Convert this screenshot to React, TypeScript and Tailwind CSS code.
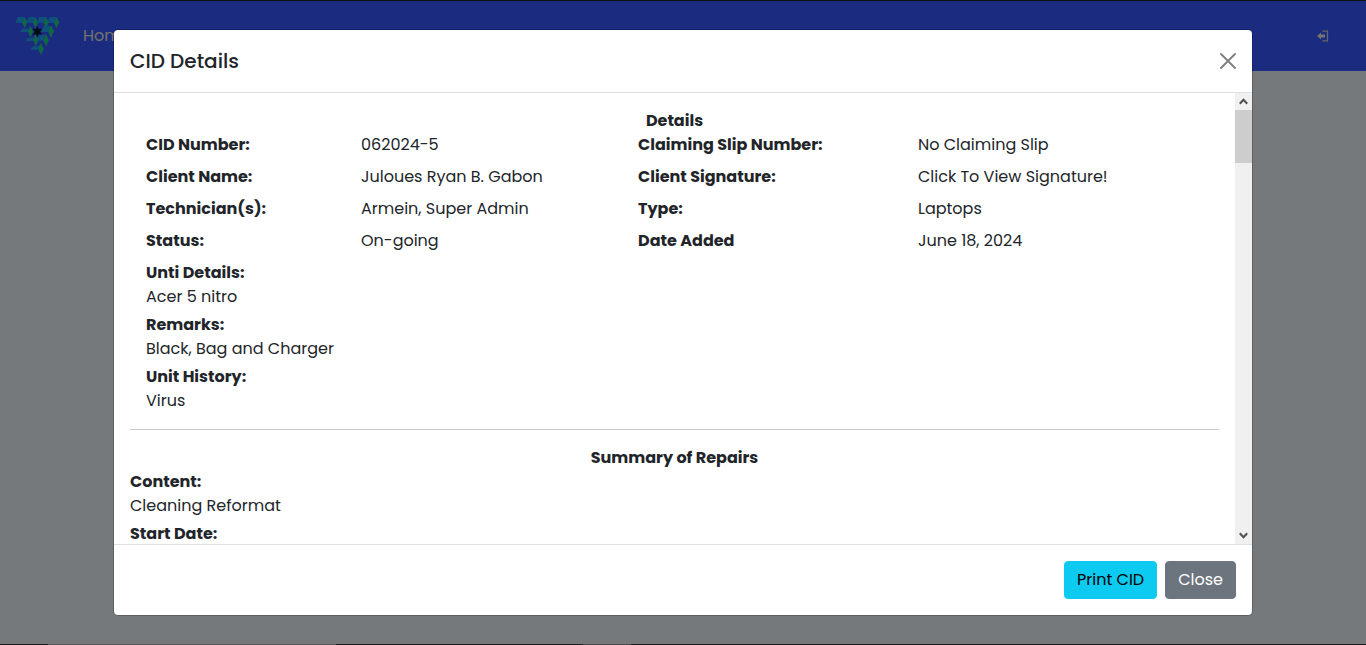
import React from "react";

const details: [string, string, string, string][] = [
  ["CID Number:", "062024-5", "Claiming Slip Number:", "No Claiming Slip"],
  ["Client Name:", "Juloues Ryan B. Gabon", "Client Signature:", "Click To View Signature!"],
  ["Technician(s):", "Armein, Super Admin", "Type:", "Laptops"],
  ["Status:", "On-going", "Date Added", "June 18, 2024"],
];

const notes: [string, string][] = [
  ["Unti Details:", "Acer 5 nitro"],
  ["Remarks:", "Black, Bag and Charger"],
  ["Unit History:", "Virus"],
];

function Logo() {
  return (
    <svg viewBox="48 48 135 120" className="h-10 w-[45px]" aria-hidden="true">
      <g fill="#1fcf86">
        <path d="M74 51l8 16-8 18-8-18zM106 51l8 16-8 17-8-17zM138 51l8 16-8 17-8-17zM170 51l8 16-9 18-8-18z" />
        <path d="M91 78l9 16-8 18-9-18zM153 76l9 17-9 20-9-20zM106 103l10 17-8 18-9-18zM138 103l9 17-9 19-9-19zM122 129l10 17-9 19-9-19z" />
      </g>
      <g fill="#1ea2f6">
        <path d="M54 51h22l-9 17H46zM86 51h22l-9 17H78zM118 51h22l-9 17h-21zM150 51h21l-9 17h-20z" />
        <path d="M68 86h20l-5 10H60zM131 78h20l-8 18h-21zM84 113h19l-5 10H76zM117 104h19l-8 18h-17zM99 139h19l-5 10H91z" />
      </g>
      <path
        d="M112 78l4 9 11-1-7 9 7 9-11-1-4 9-4-9-11 1 7-9-7-9 11 1z"
        fill="#081b30"
      />
    </svg>
  );
}

function LogoutIcon() {
  return (
    <svg viewBox="0 0 12 12" className="size-3" fill="none" aria-hidden="true">
      <path d="M5.5 1.2h5v9.6h-5" stroke="#d0d0d0" strokeWidth="1.2" />
      <path d="M0 6l4-3.6v2.1h4v3H4v2.1z" fill="#e6e6e6" />
    </svg>
  );
}

function Chevron({ down = false }: { down?: boolean }) {
  return (
    <svg viewBox="0 0 9 7" className="h-[7px] w-[9px]" fill="none" aria-hidden="true">
      <path d={down ? "M.8 1.2l3.7 3.9 3.7-3.9" : "M.8 5.8l3.7-3.9 3.7 3.9"} stroke="#505050" strokeWidth="2.1" />
    </svg>
  );
}

export default function App() {
  const body = React.useRef<HTMLDivElement>(null);
  const scroll = (top: number) => body.current?.scrollBy({ top });

  return (
    <div className="relative h-screen overflow-hidden bg-[#eaf2f6] font-['Poppins','Inter',sans-serif] text-base text-[#212529]">
      <nav className="flex h-[71px] items-center bg-[#3656fe] px-4">
        <a href="#" aria-label="Dashboard">
          <Logo />
        </a>
        <a href="#" className="ml-[22px] text-[#e0e0e0]">
          Home
        </a>
        <button type="button" aria-label="Log out" className="mr-[17px] ml-auto p-1">
          <LogoutIcon />
        </button>
      </nav>

      <div className="absolute inset-0 flex flex-col bg-black/50">
        <div className="h-px shrink-0 bg-[#111]" />
        <div className="flex min-h-0 flex-1 justify-center px-4 pt-[29px] pb-[29px]">
          <div
            role="dialog"
            aria-modal="true"
            aria-labelledby="dialog-title"
            className="flex w-full max-w-[1138px] flex-col overflow-hidden rounded-[4px] bg-white ring-1 ring-black/20"
          >
            <header className="flex h-[63px] shrink-0 items-center justify-between border-b border-[#dee2e6] px-4">
              <h1 id="dialog-title" className="text-xl font-medium">
                CID Details
              </h1>
              <button type="button" aria-label="Close dialog">
                <svg viewBox="0 0 16 16" className="size-4" stroke="#7f7f7f" strokeWidth="1.8" strokeLinecap="round">
                  <path d="M1 1l14 14M15 1L1 15" />
                </svg>
              </button>
            </header>

            <div className="flex min-h-0 flex-1">
              <div ref={body} className="min-w-0 flex-1 overflow-hidden p-4">
                <section className="px-4">
                  <h2 className="text-center font-bold">Details</h2>
                  <dl className="grid grid-cols-[215fr_277fr_280fr_285fr] gap-y-2">
                    {details.map(([a, b, c, d]) => (
                      <React.Fragment key={a}>
                        <dt className="font-bold">{a}</dt>
                        <dd>{b}</dd>
                        <dt className="font-bold">{c}</dt>
                        <dd>{d}</dd>
                      </React.Fragment>
                    ))}
                  </dl>
                  <dl className="mt-2 flex flex-col gap-1">
                    {notes.map(([label, value]) => (
                      <div key={label}>
                        <dt className="font-bold">{label}</dt>
                        <dd>{value}</dd>
                      </div>
                    ))}
                  </dl>
                </section>
                <hr className="my-4 border-[#c7c8c9]" />
                <section>
                  <h2 className="text-center font-bold">Summary of Repairs</h2>
                  <dl className="flex flex-col gap-1">
                    <div>
                      <dt className="font-bold">Content:</dt>
                      <dd>Cleaning Reformat</dd>
                    </div>
                    <div>
                      <dt className="font-bold">Start Date:</dt>
                    </div>
                  </dl>
                </section>
              </div>

              <div className="flex w-[17px] shrink-0 flex-col bg-[#f0f0f0]">
                <button
                  type="button"
                  aria-label="Scroll up"
                  onClick={() => scroll(-40)}
                  className="flex h-[17px] items-center justify-center"
                >
                  <Chevron />
                </button>
                <div className="h-[53px] bg-[#cdcdcd]" />
                <button
                  type="button"
                  aria-label="Scroll down"
                  onClick={() => scroll(40)}
                  className="mt-auto flex h-[17px] items-center justify-center"
                >
                  <Chevron down />
                </button>
              </div>
            </div>

            <footer className="flex h-[71px] shrink-0 items-center justify-end gap-2 border-t border-[#dee2e6] px-4">
              <button
                type="button"
                className="h-[38px] rounded-[4px] border border-[#0dcaf0] bg-[#0dcaf0] px-3 text-black"
              >
                Print CID
              </button>
              <button
                type="button"
                className="h-[38px] rounded-[4px] border border-[#6c757d] bg-[#6c757d] px-3 text-white"
              >
                Close
              </button>
            </footer>
          </div>
        </div>
        <div className="flex h-px shrink-0 bg-[#1c1c1c]">
          <div className="ml-12 w-72 bg-[#5a5a5a]" />
          <div className="ml-[247px] w-12 bg-[#484848]" />
        </div>
      </div>
    </div>
  );
}
